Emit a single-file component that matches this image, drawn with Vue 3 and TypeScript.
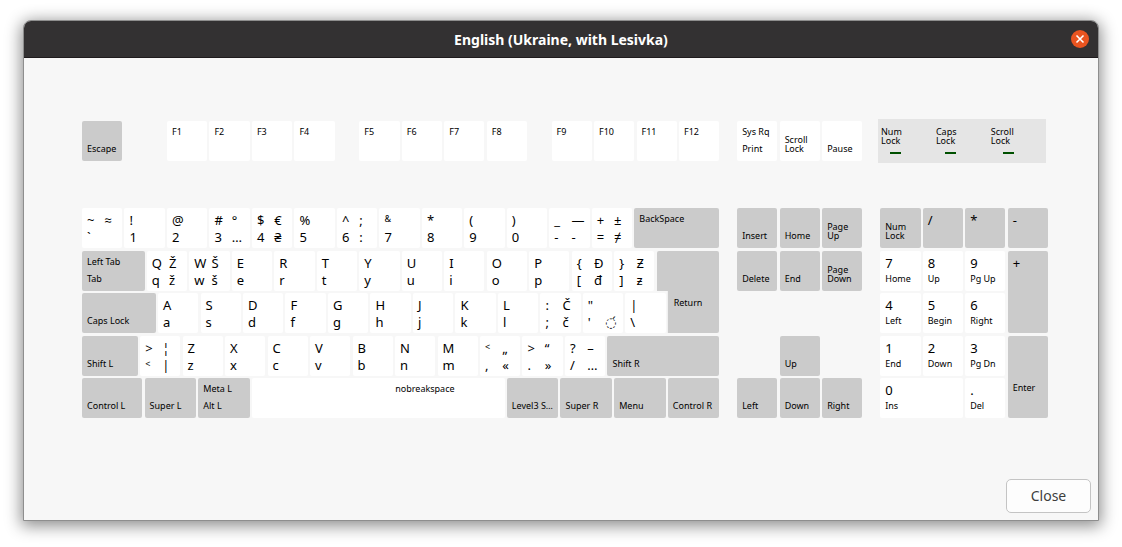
<script setup lang="ts">
interface Label {
  text: string
  small: boolean
  row: number
  col: number
}

interface Key {
  labels: Label[]
  units: number
  kind: string
}

const one = (text: string, row: number, col: number, small: boolean): Label => ({ text, row, col, small })

/* Character key: base, shifted, third level, fourth level. Prefix "~~" marks a small glyph. */
function glyphs(base: string, shifted: string, third = '', fourth = ''): Key {
  const slots: [string, number, number][] = [
    [shifted, 1, 1],
    [fourth, 1, 2],
    [base, 2, 1],
    [third, 2, 2],
  ]
  const labels = slots
    .filter(([text]) => text !== '')
    .map(([text, row, col]) => one(text.replace('~~', ''), row, col, text.startsWith('~~')))
  return { labels, units: 18, kind: 'plain' }
}

/* Named key: lower label, optional upper label. */
function named(lower: string, units = 18, kind = 'dark', upper = ''): Key {
  const labels: Label[] = []
  if (upper) labels.push(one(upper, 1, 1, true))
  if (lower) labels.push(one(lower, 2, 1, true))
  return { labels, units, kind }
}

function digit(value: string, name: string, kind = 'plain'): Key {
  const labels = [one(value, 1, 1, false)]
  if (name) labels.push(one(name, 2, 1, true))
  return { labels, units: 18, kind }
}

const fn = (n: number): Key => named('', 18, 'plain', `F${n}`)
const functionGroups: Key[][] = [
  [named('Escape')],
  [1, 2, 3, 4].map(fn),
  [5, 6, 7, 8].map(fn),
  [9, 10, 11, 12].map(fn),
]

const systemKeys: Key[] = [
  named('Print', 18, 'plain', 'Sys Rq'),
  named('Scroll\nLock', 18, 'plain'),
  named('Pause', 18, 'plain'),
]

const leds = ['Num\nLock', 'Caps\nLock', 'Scroll\nLock']

const letters = (text: string): Key[] => [...text].map((c) => glyphs(c.toLowerCase(), c))

const mainRows: Key[][] = [
  [
    glyphs('`', '~', '', '≈'),
    glyphs('1', '!'),
    glyphs('2', '@'),
    glyphs('3', '#', '…', '°'),
    glyphs('4', '$', '₴', '€'),
    glyphs('5', '%'),
    glyphs('6', '^', ':', ';'),
    glyphs('7', '~~&'),
    glyphs('8', '*'),
    glyphs('9', '('),
    glyphs('0', ')'),
    glyphs('-', '_', '-', '—'),
    glyphs('=', '+', '≠', '±'),
    named('', 38, 'dark', 'BackSpace'),
  ],
  [
    named('Tab', 28, 'dark', 'Left Tab'),
    glyphs('q', 'Q', 'ž', 'Ž'),
    glyphs('w', 'W', 'š', 'Š'),
    ...letters('ERTYUIOP'),
    glyphs('[', '{', 'đ', 'Đ'),
    glyphs(']', '}', 'ƶ', 'Ƶ'),
    named('Return', 28, 'dark tall return'),
  ],
  [
    named('Caps Lock', 33),
    ...letters('ASDFGHJKL'),
    glyphs(';', ':', 'č', 'Č'),
    { ...glyphs("'", '"', '◌́'), kind: 'plain accent' },
    glyphs('\\', '|'),
  ],
  [
    named('Shift L', 25),
    glyphs('~~<', '>', '|', '¦'),
    ...letters('ZXCVBNM'),
    glyphs(',', '~~<', '«', '„'),
    glyphs('.', '>', '»', '“'),
    glyphs('/', '?', '…', '–'),
    named('Shift R', 50),
  ],
  [
    named('Control L', 27),
    named('Super L', 23),
    named('Alt L', 23, 'dark', 'Meta L'),
    { labels: [one('nobreakspace', 1, 2, true)], units: 113, kind: 'plain' },
    named('Level3 S…', 23),
    named('Super R', 23),
    named('Menu', 23),
    named('Control R', 23),
  ],
]

const navigation: Key[] = [
  named('Insert'),
  named('Home'),
  named('Page\nUp'),
  named('Delete'),
  named('End'),
  named('Page\nDown'),
  named('Up', 18, 'dark arrow-up'),
  named('Left', 18, 'dark arrow-left'),
  named('Down', 18, 'dark arrow-down'),
  named('Right', 18, 'dark arrow-right'),
]

const keypad: Key[] = [
  named('Num\nLock'),
  digit('/', '', 'dark'),
  digit('*', '', 'dark'),
  digit('-', '', 'dark'),
  digit('7', 'Home'),
  digit('8', 'Up'),
  digit('9', 'Pg Up'),
  digit('+', '', 'dark tall'),
  digit('4', 'Left'),
  digit('5', 'Begin'),
  digit('6', 'Right'),
  digit('1', 'End'),
  digit('2', 'Down'),
  digit('3', 'Pg Dn'),
  named('Enter', 18, 'dark tall'),
  { ...digit('0', 'Ins', 'plain double'), units: 37 },
  digit('.', 'Del'),
]

const labelClass = (l: Label): (string | Record<string, boolean>)[] => [
  'label',
  `row-${l.row}`,
  `col-${l.col}`,
  { small: l.small },
]
</script>

<template>
  <div class="desktop">
    <section class="window" aria-labelledby="window-title">
      <header class="titlebar">
        <h1 id="window-title">English (Ukraine, with Lesivka)</h1>
        <button class="window-close" type="button" aria-label="Close window">
          <svg viewBox="0 0 18 18" width="18" height="18" aria-hidden="true">
            <path d="M5.5 5.5 12.5 12.5M12.5 5.5 5.5 12.5" />
          </svg>
        </button>
      </header>

      <main class="preview">
        <div class="board">
          <div class="band">
            <div class="function-row">
              <div v-for="(group, g) in functionGroups" :key="g" class="key-row">
                <div v-for="(key, k) in group" :key="k" class="key" :class="key.kind" :style="{ '--w': key.units }">
                  <span v-for="(l, i) in key.labels" :key="i" :class="labelClass(l)">{{ l.text }}</span>
                </div>
              </div>
            </div>
            <div class="key-row">
              <div v-for="(key, k) in systemKeys" :key="k" class="key" :class="key.kind" :style="{ '--w': key.units }">
                <span v-for="(l, i) in key.labels" :key="i" :class="labelClass(l)">{{ l.text }}</span>
              </div>
            </div>
            <div class="led-panel">
              <div v-for="led in leds" :key="led" class="led">
                <span class="led-name">{{ led }}</span>
                <span class="led-bar"></span>
              </div>
            </div>
          </div>

          <div class="band">
            <div class="main-block">
              <div v-for="(row, r) in mainRows" :key="r" class="key-row">
                <div v-for="(key, k) in row" :key="k" class="key" :class="key.kind" :style="{ '--w': key.units }">
                  <span v-for="(l, i) in key.labels" :key="i" :class="labelClass(l)">{{ l.text }}</span>
                </div>
              </div>
            </div>
            <div class="pad navigation">
              <div v-for="(key, k) in navigation" :key="k" class="key" :class="key.kind" :style="{ '--w': key.units }">
                <span v-for="(l, i) in key.labels" :key="i" :class="labelClass(l)">{{ l.text }}</span>
              </div>
            </div>
            <div class="pad keypad">
              <div v-for="(key, k) in keypad" :key="k" class="key" :class="key.kind" :style="{ '--w': key.units }">
                <span v-for="(l, i) in key.labels" :key="i" :class="labelClass(l)">{{ l.text }}</span>
              </div>
            </div>
          </div>
        </div>
      </main>

      <footer class="actions">
        <button class="close" type="button">Close</button>
      </footer>
    </section>
  </div>
</template>

<style>
body {
  background: #fff;
}
</style>

<style scoped>
.desktop {
  padding: 20px 23px 26px;
  font-family: 'Noto Sans', 'Open Sans', 'DejaVu Sans', sans-serif;
  color: #000;
}

.window {
  border: 1px solid #8e8e8e;
  border-radius: 8px 8px 0 0;
  background: #f7f7f7;
  box-shadow: 0 3px 16px 2px rgba(0, 0, 0, 0.45);
}

.titlebar {
  display: grid;
  grid-template-columns: 1fr auto 1fr;
  align-items: center;
  height: 36px;
  padding: 0 9px;
  border-bottom: 1px solid #1f1b1d;
  border-radius: 7px 7px 0 0;
  background: #333132;
}

.titlebar h1 {
  grid-column: 2;
  margin: 0;
  padding-top: 2px;
  font-size: 14px;
  line-height: 20px;
  font-weight: 700;
  color: #fff;
}

.window-close {
  justify-self: end;
  width: 18px;
  height: 18px;
  padding: 0;
  border: 0;
  border-radius: 50%;
  background: #e95420;
}

.window-close svg {
  display: block;
  fill: none;
  stroke: #fff;
  stroke-width: 1.6;
}

.preview {
  container-type: inline-size;
  padding: 63px 50px 61px 58px;
}

/* All board measures are multiples of --u, one 432nd of the board's width. */
.board {
  --u: calc(100cqw / 432);
  display: flex;
  flex-direction: column;
  gap: calc(var(--u) * 21);
}

.band {
  display: flex;
  gap: calc(var(--u) * 8);
}

.main-block {
  display: flex;
  flex-direction: column;
  gap: var(--u);
  width: calc(var(--u) * 285);
}

.function-row {
  display: flex;
  justify-content: space-between;
  width: calc(var(--u) * 285);
}

.function-row .key-row:first-child {
  margin-right: calc(var(--u) * 9);
}

.key-row {
  display: flex;
  gap: var(--u);
  height: calc(var(--u) * 18);
}

.pad {
  display: grid;
  grid-template-columns: repeat(3, calc(var(--u) * 18));
  grid-auto-rows: calc(var(--u) * 18);
  gap: var(--u);
}

.keypad {
  grid-template-columns: repeat(4, calc(var(--u) * 18));
}

.key {
  display: grid;
  grid-template-columns: 57% 1fr;
  grid-template-rows: 17px 17px;
  align-content: start;
  flex: none;
  box-sizing: border-box;
  width: calc(var(--u) * var(--w));
  height: calc(var(--u) * 18);
  padding: 4px 5px 0;
  border-radius: 2px;
  background: #fff;
}

.dark {
  background: #cbcbcb;
}

.tall {
  grid-row: span 2;
  grid-template-rows: 41px 17px;
  height: calc(var(--u) * 37);
}

.double {
  grid-column: span 2;
}

.return {
  padding-left: 17px;
  clip-path: polygon(
    0 0,
    100% 0,
    100% 100%,
    calc(var(--u) * 5) 100%,
    calc(var(--u) * 5) calc(var(--u) * 18),
    0 calc(var(--u) * 18)
  );
}

.arrow-up {
  grid-area: 4 / 2;
}

.arrow-left {
  grid-area: 5 / 1;
}

.arrow-down {
  grid-area: 5 / 2;
}

.arrow-right {
  grid-area: 5 / 3;
}

.label {
  font-size: 13px;
  line-height: 17px;
  white-space: pre;
}

.row-1 {
  grid-row: 1;
}

.row-2 {
  grid-row: 2;
}

.col-1 {
  grid-column: 1;
}

.col-2 {
  grid-column: 2;
}

.accent .col-2 {
  font-family: 'DejaVu Sans', sans-serif;
}

.small {
  align-self: end;
  margin-bottom: 6px;
  font-size: 9px;
  line-height: 9px;
}

.row-1.small {
  align-self: start;
  margin: 2px 0 0;
}

.led-panel {
  display: grid;
  grid-template-columns: repeat(3, 1fr);
  box-sizing: border-box;
  width: calc(var(--u) * 75);
  height: calc(var(--u) * 20);
  margin: calc(var(--u) * -1) 0 calc(var(--u) * -1) calc(var(--u) * -1);
  padding: 8px 0 0 3px;
  background: #e5e5e5;
}

.led-name {
  display: block;
  font-size: 9px;
  line-height: 9px;
  white-space: pre;
}

.led-bar {
  display: block;
  width: 11px;
  height: 2px;
  margin: 7px 0 0 9px;
  background: #005000;
}

.led:last-child .led-bar {
  margin-left: 12px;
}

.actions {
  display: flex;
  justify-content: flex-end;
  padding: 0 7px 7px;
}

.close {
  min-width: 85px;
  height: 34px;
  padding: 0 16px;
  border: 1px solid #c4c4c4;
  border-radius: 5px;
  background: #fdfdfd;
  font-family: inherit;
  font-size: 14px;
  line-height: 20px;
  color: #3d3d3d;
}
</style>
